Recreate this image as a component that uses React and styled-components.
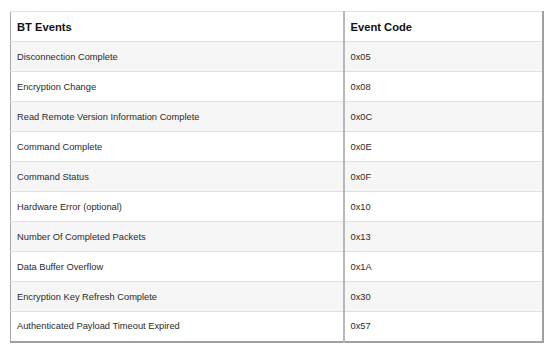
import React from "react";
import styled, { createGlobalStyle } from "styled-components";

const Global = createGlobalStyle`
  html, body { margin: 0; padding: 0; background: #fff; }
  body { font-family: "Liberation Sans", Arial, sans-serif; }
`;

const Page = styled.div`
  padding: 11px 0 0 10px;
`;

const Table = styled.table`
  width: 534px;
  border-collapse: collapse;
  border-top: 1px solid #e2e2e2;
  border-left: 1px solid #a8a8a8;
  border-right: 2px solid #a0a0a0;
  border-bottom: 2px solid #a0a0a0;
  table-layout: fixed;
`;

const Row = styled.tr`
  height: 30px;
  background: ${(p) => (p.$shade ? "#f6f6f6" : "#fff")};
  border-bottom: 1px solid #e0e0e0;
`;

const HeadCell = styled.th`
  text-align: left;
  font-weight: bold;
  font-size: 11.2px;
  color: #111;
  padding: 0 0 0 6px;
  border-right: ${(p) => (p.$divider ? "2px solid #b8b8b8" : "none")};
`;

const Cell = styled.td`
  font-size: 9.3px;
  color: #2a2a2a;
  padding: 0 0 0 6px;
  border-right: ${(p) => (p.$divider ? "2px solid #b8b8b8" : "none")};
`;

const rows = [
  ["Disconnection Complete", "0x05"],
  ["Encryption Change", "0x08"],
  ["Read Remote Version Information Complete", "0x0C"],
  ["Command Complete", "0x0E"],
  ["Command Status", "0x0F"],
  ["Hardware Error (optional)", "0x10"],
  ["Number Of Completed Packets", "0x13"],
  ["Data Buffer Overflow", "0x1A"],
  ["Encryption Key Refresh Complete", "0x30"],
  ["Authenticated Payload Timeout Expired", "0x57"],
];

export default function App() {
  return (
    <>
      <Global />
      <Page>
        <Table>
          <colgroup>
            <col style={{ width: 333 }} />
            <col />
          </colgroup>
          <thead>
            <Row>
              <HeadCell $divider>BT Events</HeadCell>
              <HeadCell>Event Code</HeadCell>
            </Row>
          </thead>
          <tbody>
            {rows.map(([name, code], i) => (
              <Row key={code} $shade={i % 2 === 0}>
                <Cell $divider>{name}</Cell>
                <Cell>{code}</Cell>
              </Row>
            ))}
          </tbody>
        </Table>
      </Page>
    </>
  );
}
